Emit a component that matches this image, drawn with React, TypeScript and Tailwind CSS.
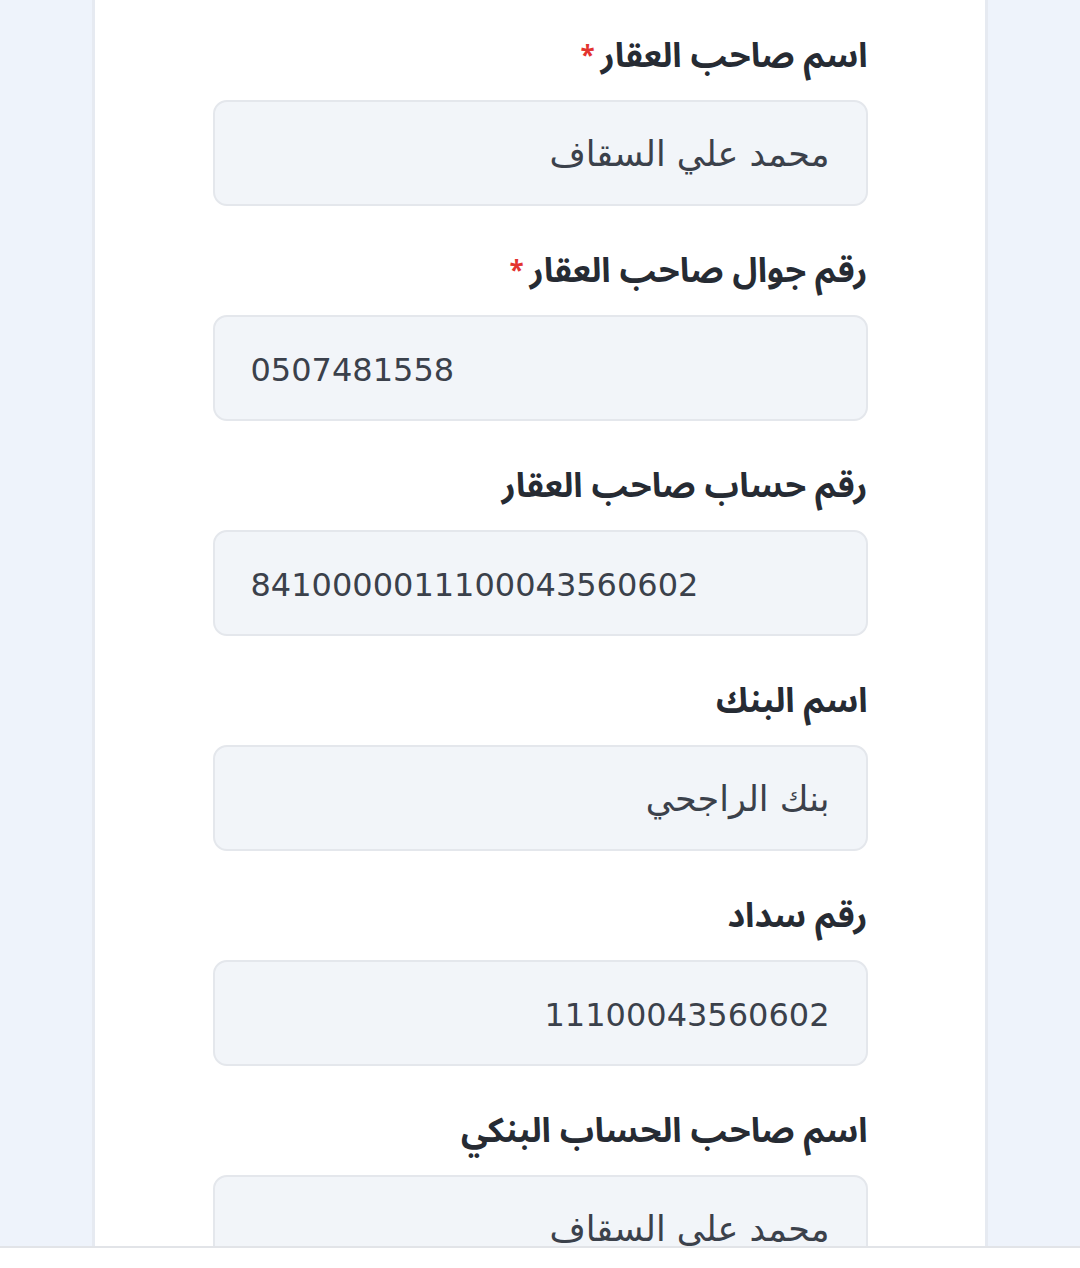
import React from 'react'

type Field = {
  label: string
  value: string
  required?: boolean
  ltr?: boolean
  numeric?: boolean
}

const fields: Field[] = [
  { label: 'اسم صاحب العقار', value: 'محمد علي السقاف', required: true },
  { label: 'رقم جوال صاحب العقار', value: '0507481558', required: true, ltr: true, numeric: true },
  { label: 'رقم حساب صاحب العقار', value: '8410000011100043560602', ltr: true, numeric: true },
  { label: 'اسم البنك', value: 'بنك الراجحي' },
  { label: 'رقم سداد', value: '11100043560602', numeric: true },
  { label: 'اسم صاحب الحساب البنكي', value: 'محمد علي السقاف' },
]

const font = "font-['Noto_Sans_Arabic','Noto_Sans','DejaVu_Sans',sans-serif]"

function FormField({ field }: { field: Field }) {
  return (
    <div className="flex flex-col">
      <label className="flex h-[50px] items-center gap-1.5 text-[34px] font-bold text-[#262b33]">
        {field.label}
        {field.required && <span className="text-[26px] text-[#e3342f]">*</span>}
      </label>
      <div
        dir={field.ltr ? 'ltr' : 'rtl'}
        className={`mt-[19px] flex h-[106px] items-center rounded-[14px] border-2 border-[#e4e7ec] bg-[#f2f5f9] px-[36px] pt-[3px] font-['DejaVu_Sans',sans-serif] text-[#3b414b] ${
          field.numeric ? 'text-[32px]' : 'text-[35px]'
        }`}
      >
        {field.value}
      </div>
    </div>
  )
}

export default function App() {
  return (
    <div dir="rtl" className={`flex h-[1268px] flex-col bg-white ${font}`}>
      <div className="flex h-[1246px] justify-center overflow-hidden bg-[#eef3fb]">
        <div className="h-full w-[896px] border-x-[3px] border-[#e6eaf1] bg-white">
          <div className="mx-auto flex w-[655px] flex-col gap-[40px] pt-[31px]">
            {fields.map((f) => (
              <FormField key={f.label} field={f} />
            ))}
          </div>
        </div>
      </div>
      <div className="h-[22px] border-t-2 border-[#e2e4e8] bg-white" />
    </div>
  )
}
